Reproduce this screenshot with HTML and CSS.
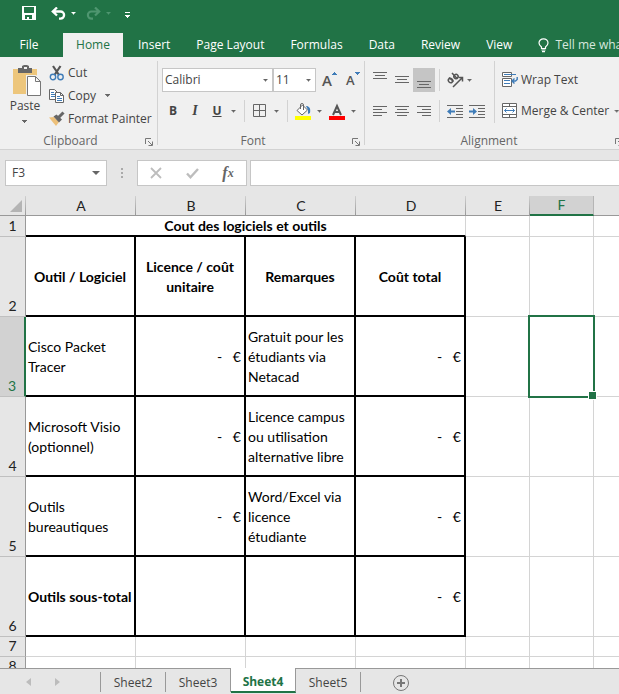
FILE: index.html
```html
<!DOCTYPE html>
<html lang="en">
<head>
<meta charset="utf-8">
<title>Spreadsheet</title>
<link rel="stylesheet" href="styles.css">
</head>
<body>
<header class="titlebar">
  <div class="quick">
    <button class="icon-btn" aria-label="Save"><svg width="14" height="14" viewBox="0 0 14 14"><path fill="#fff" fill-rule="evenodd" d="M0 0h14v14H0zM2 1v5.500l.5.5h9l.5-.5V1zM3 9v4h2v-2h2v2h3V9z"/></svg></button>
    <button class="icon-btn undo" aria-label="Undo"><svg width="15" height="13" viewBox="0 0 15 13" fill="none" stroke="#fff" stroke-width="2.300"><path d="M6 .5 1.800 4.500 6 8.500M2 4.500h7.500a3.600 3.600 0 0 1 0 7.200H8"/></svg><span class="caret light"></span></button>
    <button class="icon-btn redo" aria-label="Redo"><svg width="15" height="13" viewBox="0 0 15 13" fill="none" stroke="#4f9670" stroke-width="2.200"><path d="M9 .5 13.200 4.500 9 8.500M13 4.500H5.500a3.600 3.600 0 0 0 0 7.200H7"/></svg><span class="caret dim"></span></button>
    <button class="icon-btn more" aria-label="Customize toolbar"><svg width="5" height="6" viewBox="0 0 5 6" fill="#fff"><path d="M0 0h5v1H0zM0 3h5v1H4v1H3v1H2V5H1V4H0z"/></svg></button>
  </div>
</header>
<nav class="tabs">
  <button class="tab file">File</button>
  <button class="tab active">Home</button>
  <button class="tab">Insert</button>
  <button class="tab">Page Layout</button>
  <button class="tab">Formulas</button>
  <button class="tab">Data</button>
  <button class="tab">Review</button>
  <button class="tab">View</button>
  <button class="tab tell"><svg width="11" height="15" viewBox="0 0 11 15" fill="none" stroke="#fff" stroke-width="1.200"><path d="M3.500 10.500V9C2 7.800 1 6.700 1 5a4.500 4.200 0 0 1 9 0c0 1.700-1 2.800-2.500 4v1.500zM3.500 12h4M4 13.700h3"/></svg>Tell me what you want to do</button>
</nav>
<section class="ribbon">
  <div class="group clipboard">
    <div class="group-body">
      <button class="paste"><svg width="29" height="32" viewBox="0 0 29 32"><path fill="#edc67c" d="M0 4h24v25H0z"/><path fill="#666" fill-rule="evenodd" d="M5 3h4V1l2-1h3l2 1v2h3v5H5zM11 2v2h3V2z"/><path fill="#fff" stroke="#f0f0f0" stroke-width="3" d="M14.500 11.500h8l5 5v14h-13z"/><path fill="#fff" stroke="#777" d="M14.500 11.500h8l5 5v14h-13zM22.500 11.500v5h5"/></svg><span>Paste</span><i class="caret"></i></button>
      <div class="stack">
        <button class="cmd"><svg width="16" height="16" viewBox="0 0 16 16" fill="none"><path stroke="#555" stroke-width="2.200" d="M4 1 10 10M11.500 1 5.500 10"/><circle cx="4" cy="12" r="2.700" stroke="#3f7cb8" stroke-width="1.400"/><circle cx="11.500" cy="12" r="2.700" stroke="#3f7cb8" stroke-width="1.400"/></svg>Cut</button>
        <button class="cmd"><svg width="16" height="16" viewBox="0 0 16 16"><path fill="#fff" stroke="#666" d="M.5 1.500h5l3 3v7h-8z"/><path stroke="#3f7cb8" d="M2 4.500h3M2 6.500h4M2 8.500h4"/><path fill="#fff" stroke="#666" d="M6.500 4.500h5l3 3v7h-8zM11.500 4.500v3h3"/><path stroke="#3f7cb8" d="M8 8.500h3M8 10.500h5M8 12.500h5"/></svg>Copy<i class="caret"></i></button>
        <button class="cmd"><svg width="16" height="16" viewBox="0 0 16 16"><path fill="#edc07a" d="M0 6.500 5 6l5 5-3 4z"/><path fill="#666" d="m4.500 5.500 3-2 5.500 5-3 3z"/><path stroke="#666" stroke-width="3" d="m9.500 6.500 5-5"/></svg>Format Painter</button>
      </div>
    </div>
    <div class="group-label">Clipboard<svg class="launch" width="8" height="8" viewBox="0 0 8 8" fill="none" stroke="#777"><path d="M.5 6V.5H6M3 3l4 4M7.500 3.500v4h-4"/></svg></div>
  </div>
  <div class="group font">
    <div class="group-body rows">
      <div class="row">
        <div class="combo family"><select aria-label="Font"><option>Calibri</option></select><i class="caret"></i></div>
        <div class="combo size"><select aria-label="Font size"><option>11</option></select><i class="caret"></i></div>
        <button class="grow" aria-label="Increase font size"><span class="glyph">A</span><svg width="5" height="3" viewBox="0 0 5 3"><path fill="#3f7cb8" d="M0 3V2h1V1h1V0h1v1h1v1h1v1z"/></svg></button>
        <button class="shrink" aria-label="Decrease font size"><span class="glyph">A</span><svg width="5" height="3" viewBox="0 0 5 3"><path fill="#3f7cb8" d="M0 0h5v1H4v1H3v1H2V2H1V1H0z"/></svg></button>
      </div>
      <div class="row">
        <button class="sq bold">B</button>
        <button class="sq italic">I</button>
        <button class="sq underline">U</button>
        <i class="caret"></i>
        <i class="sep"></i>
        <button class="sq wide" aria-label="Borders"><svg width="14" height="14" viewBox="0 0 14 14" fill="none" stroke="#666"><path d="M.5 .5h12v12H.5zM6.500 .5v12M.5 6.500h12"/></svg></button>
        <i class="caret"></i>
        <i class="sep"></i>
        <button class="sq wide" aria-label="Fill color"><svg width="16" height="17" viewBox="0 0 16 17"><path fill="#fff" stroke="#666" d="M2 7.500 7.500 2l5 5L7 12z"/><path fill="none" stroke="#666" d="M5.500 6V2a1.500 1.500 0 0 1 3 0v5"/><path fill="#3f7cb8" d="M11 3c3 0 5 2 4 7l-2 1V7z"/><path fill="#ff0" d="M0 13h16v4H0z"/></svg></button>
        <i class="caret"></i>
        <button class="sq wide color" aria-label="Font color"><svg width="16" height="17" viewBox="0 0 16 17"><path fill="none" stroke="#555" stroke-width="2" d="M4 12 8 3l4 9M5.500 9h5"/><path fill="red" d="M0 13h16v4H0z"/></svg></button>
        <i class="caret"></i>
      </div>
    </div>
    <div class="group-label">Font<svg class="launch" width="8" height="8" viewBox="0 0 8 8" fill="none" stroke="#777"><path d="M.5 6V.5H6M3 3l4 4M7.500 3.500v4h-4"/></svg></div>
  </div>
  <div class="group align">
    <div class="group-body">
      <div class="rows">
        <div class="row">
          <button class="al" aria-label="Top align"><svg width="14" height="16" viewBox="0 0 14 16" stroke="#666"><path d="M0 .5h14M2 3.500h10M0 6.500h14"/></svg></button>
          <button class="al" aria-label="Middle align"><svg width="14" height="16" viewBox="0 0 14 16" stroke="#666"><path d="M0 4.500h14M2 7.500h10M0 10.500h14"/></svg></button>
          <button class="al on" aria-label="Bottom align"><svg width="14" height="16" viewBox="0 0 14 16" stroke="#666"><path d="M0 9.500h14M2 12.500h10M0 15.500h14"/></svg></button>
          <i class="sep"></i>
          <button class="ori" aria-label="Orientation"><svg width="17" height="16" viewBox="0 0 17 16" fill="none" stroke="#555" stroke-width="1.500"><ellipse cx="3.500" cy="8.500" rx="2" ry="2.300" transform="rotate(-45 3.500 8.500)"/><path d="m2 5.500 4.500 4M5 1l5.500 6"/><ellipse cx="9" cy="4.500" rx="2.200" ry="2" transform="rotate(-45 9 4.500)"/><path d="m6 15 9-9M11.500 5.500H15.500v4"/></svg></button>
          <i class="caret"></i>
        </div>
        <div class="row">
          <button class="al" aria-label="Align left"><svg width="14" height="11" viewBox="0 0 14 11" stroke="#666"><path d="M0 .5h14M0 3.500h9M0 6.500h14M0 9.500h9"/></svg></button>
          <button class="al" aria-label="Center"><svg width="14" height="11" viewBox="0 0 14 11" stroke="#666"><path d="M0 .5h14M2 3.500h10M0 6.500h14M2 9.500h10"/></svg></button>
          <button class="al" aria-label="Align right"><svg width="14" height="11" viewBox="0 0 14 11" stroke="#666"><path d="M0 .5h14M5 3.500h9M0 6.500h14M5 9.500h9"/></svg></button>
          <i class="sep"></i>
          <button class="al indent" aria-label="Decrease indent"><svg width="16" height="13" viewBox="0 0 16 13"><path stroke="#666" d="M0 .5h16M9 3.500h7M9 6.500h7M9 9.500h7M0 12.500h16"/><path fill="#3f7cb8" d="M0 6.500 4 3v2.500h4v2H4V10z"/></svg></button>
          <button class="al indent" aria-label="Increase indent"><svg width="16" height="13" viewBox="0 0 16 13"><path stroke="#666" d="M0 .5h16M9 3.500h7M9 6.500h7M9 9.500h7M0 12.500h16"/><path fill="#3f7cb8" d="M8 6.500 4 3v2.500H0v2h4V10z"/></svg></button>
        </div>
      </div>
      <div class="rows second">
        <button class="cmd tall"><svg width="16" height="16" viewBox="0 0 16 16" fill="none"><path fill="#fff" stroke="#666" d="M.5 .5h9v4h-9zM.5 6.500h9v8h-9z"/><path stroke="#3f7cb8" d="M2 2.500h12M2 8.500h6M2 11.500h6"/><path stroke="#3f7cb8" stroke-width="1.400" d="M15.200 5v2.500L13.500 9H10M12.500 6.500 10 9l2.500 2.500"/></svg>Wrap Text</button>
        <button class="cmd tall merge"><svg width="16" height="16" viewBox="0 0 16 16" fill="none"><path fill="#fff" stroke="#666" d="M.5 .5h14v14H.5zM.5 3.500h14M.5 11.500h14M7.500 .5v3M7.500 11.500v3"/><path stroke="#3f7cb8" d="M2.500 7.500h10M4.500 5.500l-2 2 2 2M10.500 5.500l2 2-2 2"/></svg>Merge &amp; Center<i class="caret"></i></button>
      </div>
    </div>
    <div class="group-label">Alignment<svg class="launch" width="8" height="8" viewBox="0 0 8 8" fill="none" stroke="#777"><path d="M.5 6V.5H6M3 3l4 4M7.500 3.500v4h-4"/></svg></div>
  </div>
</section>
<section class="formula">
  <div class="namebox"><input aria-label="Name box" value="F3"><i class="caret"></i></div>
  <i class="dots"></i>
  <div class="fx">
    <button aria-label="Cancel"><svg width="12" height="12" viewBox="0 0 12 12" stroke="#bdbdbd" stroke-width="1.800"><path d="m1 1 10 10M11 1 1 11"/></svg></button>
    <button aria-label="Enter"><svg width="13" height="11" viewBox="0 0 13 11" fill="none" stroke="#bdbdbd" stroke-width="2.400"><path d="m1 5.500 3.500 3.700L12 1"/></svg></button>
    <button class="fn" aria-label="Insert function">f<sub>x</sub></button>
  </div>
  <input class="formula-input" aria-label="Formula bar">
</section>
<main class="sheet">
  <table>
    <colgroup><col class="c-head"><col class="c-wide"><col class="c-wide"><col class="c-wide"><col class="c-wide"><col class="c-std"><col class="c-std"><col></colgroup>
    <thead>
      <tr><th class="corner"><svg width="12" height="12" viewBox="0 0 12 12"><path fill="#b4b4b4" d="M12 0v12H0z"/></svg></th><th>A</th><th>B</th><th>C</th><th>D</th><th>E</th><th class="sel">F</th><th></th></tr>
    </thead>
    <tbody>
      <tr class="first"><th>1</th><td colspan="4" class="title">Cout des logiciels et outils</td><td></td><td></td><td></td></tr>
      <tr class="data heads"><th>2</th><td class="box">Outil / Logiciel</td><td class="box">Licence / coût unitaire</td><td class="box">Remarques</td><td class="box">Coût total</td><td></td><td></td><td></td></tr>
      <tr class="data"><th class="sel">3</th><td class="box">Cisco Packet Tracer</td><td class="box num">-   €</td><td class="box">Gratuit pour les étudiants via Netacad</td><td class="box num">-   €</td><td></td><td class="cursor"><i class="ring"></i></td><td></td></tr>
      <tr class="data"><th>4</th><td class="box">Microsoft Visio (optionnel)</td><td class="box num">-   €</td><td class="box">Licence campus ou utilisation alternative libre</td><td class="box num">-   €</td><td></td><td></td><td></td></tr>
      <tr class="data"><th>5</th><td class="box">Outils bureautiques</td><td class="box num">-   €</td><td class="box">Word/Excel via licence étudiante</td><td class="box num">-   €</td><td></td><td></td><td></td></tr>
      <tr class="data"><th>6</th><td class="box total">Outils sous-total</td><td class="box"></td><td class="box"></td><td class="box num">-   €</td><td></td><td></td><td></td></tr>
      <tr><th>7</th><td></td><td></td><td></td><td></td><td></td><td></td><td></td></tr>
      <tr><th>8</th><td></td><td></td><td></td><td></td><td></td><td></td><td></td></tr>
    </tbody>
  </table>
</main>
<footer class="sheets">
  <div class="nav">
    <button aria-label="Previous sheet"><svg width="5" height="8" viewBox="0 0 5 8"><path fill="#bcbcbc" d="M5 0v8L0 4z"/></svg></button>
    <button aria-label="Next sheet"><svg width="5" height="8" viewBox="0 0 5 8"><path fill="#bcbcbc" d="M0 0v8l5-4z"/></svg></button>
  </div>
  <button class="stab">Sheet2</button>
  <button class="stab before">Sheet3</button>
  <button class="stab current">Sheet4</button>
  <button class="stab">Sheet5</button>
  <button class="add" aria-label="New sheet"><svg width="18" height="18" viewBox="0 0 18 18" fill="none" stroke="#777"><circle cx="9" cy="9" r="7.500"/><path stroke-width="2" d="M5 9h8M9 5v8"/></svg></button>
</footer>
</body>
</html>
```

FILE: styles.css
```css
* { box-sizing: border-box; }
html, body { height: 100%; }
body {
  margin: 0;
  display: flex;
  flex-direction: column;
  overflow: hidden;
  background: #e6e6e6;
  color: #444;
  font: 12px/16px "Open Sans", "Noto Sans", sans-serif;
}
button {
  display: inline-flex;
  align-items: center;
  border: 0;
  padding: 0;
  background: none;
  color: inherit;
  font: inherit;
  white-space: nowrap;
}
svg { display: block; flex: none; }
.caret {
  flex: none;
  width: 5px;
  height: 3px;
  background: #666;
  clip-path: polygon(0 0, 5px 0, 5px 1px, 4px 1px, 4px 2px, 3px 2px, 3px 3px, 2px 3px, 2px 2px, 1px 2px, 1px 1px, 0 1px);
}
.caret.light { background: #fff; }
.caret.dim { background: #4f9670; }
.sep { width: 1px; height: 22px; background: #d2d2d2; flex: none; }

.titlebar { background: #217346; height: 33px; flex: none; }
.quick { display: flex; align-items: center; height: 26px; padding-left: 22px; }
.icon-btn { gap: 5px; }
.undo { margin-left: 15px; }
.redo { margin-left: 10px; }
.more { margin-left: 14px; padding-top: 4px; }

.tabs { display: flex; flex: none; height: 24px; background: #217346; overflow: hidden; }
.tab { flex: none; justify-content: center; padding: 0 13px; color: #fff; }
.tab.file { width: 63px; padding: 0 5px 0 0; }
.tab.active { width: 60px; margin-right: 2px; background: #f0f0f0; color: #217346; }
.tab.tell { gap: 6px; color: #d6e8de; }

.ribbon {
  display: flex;
  flex: none;
  height: 93px;
  padding-top: 4px;
  background: #f0f0f0;
  border-bottom: 1px solid #d2d2d2;
  overflow: hidden;
}
.group { display: flex; flex-direction: column; flex: none; height: 84px; border-right: 1px solid #d2d2d2; }
.group-body { display: flex; flex: 1; }
.group-label { position: relative; height: 12px; text-align: center; color: #666; padding-right: 16px; }
.launch { position: absolute; right: 4px; top: 5px; }
.clipboard { width: 158px; }
.font { width: 207px; }
.align { width: 258px; border: 0; }
.align .group-label { padding-right: 10px; }
.align .launch { right: 0; }
.paste { flex-direction: column; width: 49px; padding-top: 4px; }
.paste svg { margin-left: 5px; }
.paste span { margin: 1px 0 6px 1px; }
.stack { display: flex; flex-direction: column; }
.cmd { height: 23px; gap: 3px; }
.cmd .caret { margin-left: 6px; }
.rows { display: flex; flex-direction: column; gap: 7px; padding-top: 7px; }
.row { display: flex; align-items: center; height: 24px; }
.font .rows { padding-left: 4px; }
.combo { position: relative; height: 24px; background: #fff; border: 1px solid #c6c6c6; display: flex; align-items: center; padding-right: 4px; }
.combo select { appearance: none; flex: 1; min-width: 0; border: 0; padding: 0 2px; background: none; color: #444; font: inherit; }
.family { width: 111px; }
.size { width: 43px; }
.grow, .shrink { align-items: flex-start; color: #555; font-weight: 600; }
.grow { margin-left: 6px; font-size: 15px; }
.shrink { margin-left: 9px; font-size: 13px; }
.sq { width: 22px; height: 22px; justify-content: center; font-weight: 700; }
.sq + .caret { margin: 0 8px 0 3px; }
.font .sep { margin-right: 3px; }
.sq.wide { width: 24px; }
.sq.wide + .caret { margin-left: 2px; }
.italic { font-style: italic; font-family: "Liberation Serif", serif; font-size: 14px; }
.underline { text-decoration: underline; }
.sq.color { margin-left: -5px; }
.align .rows { padding-left: 4px; }
.al { width: 22px; height: 24px; justify-content: center; }
.al.on { background: #c5c5c5; }
.align .sep { margin: 0 4px; }
.ori { margin: 0 3px; }
.align .second { margin-left: 6px; padding-left: 7px; border-left: 1px solid #d2d2d2; height: 62px; }
.cmd.tall { height: 24px; }
.merge .caret { margin-left: 2px; }

.formula { display: flex; flex: none; height: 46px; padding: 10px 0; }
.namebox, .fx, .formula-input { height: 26px; background: #fff; border: 1px solid #c6c6c6; }
.namebox { display: flex; align-items: center; width: 102px; margin-left: 5px; padding-right: 6px; }
.namebox input { flex: 1; min-width: 0; border: 0; padding: 0 6px; background: none; color: #444; font: inherit; }
.namebox .caret { width: 8px; height: 4px; clip-path: polygon(0 0, 100% 0, 50% 100%); }
.dots { width: 2px; height: 10px; margin: 8px 14px; background: repeating-linear-gradient(#aaa 0 2px, transparent 2px 4px); }
.fx { display: flex; width: 110px; }
.fx button { flex: 1; justify-content: center; }
.fx .fn { font: italic 700 16px/16px "Liberation Serif", serif; color: #666; }
.fn sub { font-size: 12px; line-height: 12px; }
.formula-input { flex: 1; min-width: 0; margin-left: 3px; border-right: 0; padding: 0 6px; font: inherit; }

.sheet { flex: 1; min-height: 0; overflow: hidden; color: #000; font: 14px/20px Lato, sans-serif; background: #fff; }
table { width: 100%; table-layout: fixed; border-collapse: separate; border-spacing: 0; }
.c-head { width: 26px; }
.c-wide { width: 110px; }
.c-std { width: 64px; }
th, td { padding: 0; height: 20px; }
th { background: #e6e6e6; font-weight: 400; color: #222; }
thead th {
  border-bottom: 1px solid #999;
  line-height: 18px;
  background: linear-gradient(#d0d0d0, #999) right / 1px 100% no-repeat #e6e6e6;
}
thead th.sel { background: #d2d2d2; border-bottom: 2px solid #217346; color: #217346; border-right: 1px solid #b5b5b5; }
.corner svg { margin-left: 10px; }
tbody th { border-right: 1px solid #999; border-bottom: 1px solid #c0c0c0; padding-bottom: 1px; vertical-align: bottom; line-height: 18px; }
tbody th.sel { background: #d2d2d2; color: #217346; border-right: 2px solid #217346; }
td { border-right: 1px solid #d4d4d4; border-bottom: 1px solid #d4d4d4; text-align: left; vertical-align: middle; }
thead th:last-child { background: #e6e6e6; }
td:last-child { border-right: 0; }
.first td { height: 21px; }
.first .title { border-bottom: 2px solid #000; text-align: center; font-weight: 700; line-height: 19px; }
.data td { height: 80px; }
.data .box { border-right: 2px solid #000; border-bottom: 2px solid #000; padding: 2px 3px 0 2px; }
.heads .box { padding-right: 2px; text-align: center; font-weight: 700; }
.total { font-weight: 700; white-space: nowrap; }
.data .num { text-align: right; white-space: pre; }
.cursor { position: relative; }
.ring { position: absolute; inset: -2px; border: 2px solid #217346; z-index: 1; }
.ring::after { content: ""; position: absolute; right: -4px; bottom: -4px; width: 7px; height: 7px; background: #217346; border: 1px solid #fff; }

.sheets { display: flex; flex: none; height: 26px; border-top: 1px solid #999; }
.nav, .stab { margin: 3px 0 2px; border-right: 1px solid #999; }
.nav { display: flex; align-items: center; gap: 24px; width: 101px; padding-left: 26px; }
.stab { width: 65px; padding-top: 2px; justify-content: center; }
.stab.before { margin-top: 0; padding-top: 5px; }
.stab.current { margin: -1px 0 1px; padding-top: 4px; background: #fff; color: #217346; font-weight: 700; border-bottom: 2px solid #217346; }
.add { margin-left: 31px; padding-top: 2px; }
```
